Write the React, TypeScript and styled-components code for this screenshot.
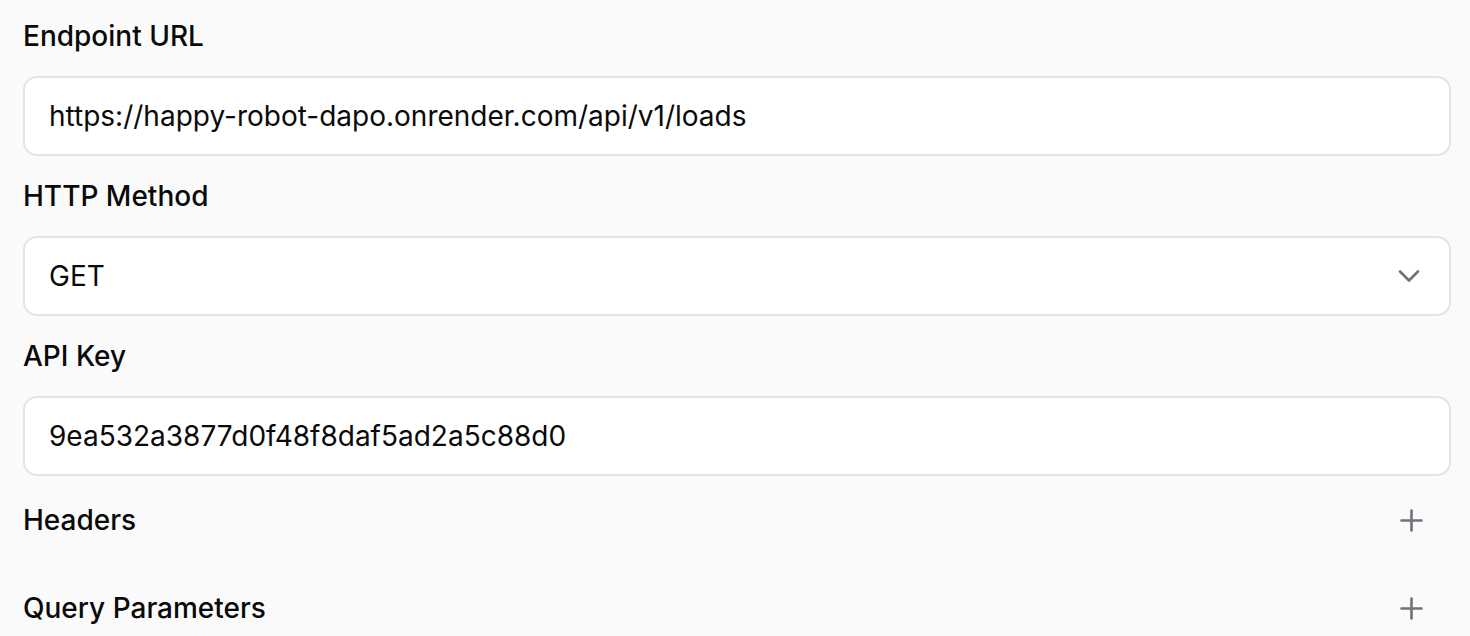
import React from "react";
import styled, { createGlobalStyle } from "styled-components";

const Global = createGlobalStyle`
  html, body { margin: 0; padding: 0; background: #fafafa; }
  body { font-family: Inter, "Noto Sans", sans-serif; color: #0a0a0a; }
`;

const Page = styled.div`
  padding: 16px 19px 0 23px;
  display: flex;
  flex-direction: column;
  gap: 20px;
  width: 1428px;
`;

const Field = styled.div`
  display: flex;
  flex-direction: column;
  gap: 20px;
`;

const Label = styled.div`
  font-size: 28px;
  line-height: 40px;
  font-weight: 500;
  color: #0a0a0a;
`;

const Box = styled.div`
  box-sizing: border-box;
  height: 80px;
  background: #ffffff;
  border: 2px solid #e4e4e7;
  border-radius: 14px;
  padding: 0 24px;
  display: flex;
  align-items: center;
  justify-content: space-between;
  font-size: 28px;
  color: #0a0a0a;
`;

const Row = styled.div<{ $top?: number }>`
  display: flex;
  align-items: center;
  justify-content: space-between;
  height: 48px;
  margin-top: ${(p) => p.$top ?? 0}px;
  padding-right: 28px;
`;

const Chevron = () => (
  <svg width="22" height="14" viewBox="0 0 22 14" fill="none" style={{ marginRight: 5 }}>
    <path d="M2 2.5 L11 11.5 L20 2.5" stroke="#71717a" strokeWidth="2.6" strokeLinecap="round" strokeLinejoin="round" />
  </svg>
);

const Plus = () => (
  <svg width="23" height="23" viewBox="0 0 23 23" fill="none">
    <path d="M11.5 1.5 V21.5 M1.5 11.5 H21.5" stroke="#71717a" strokeWidth="2.6" strokeLinecap="round" />
  </svg>
);

export default function App() {
  return (
    <>
      <Global />
      <Page>
        <Field>
          <Label>Endpoint URL</Label>
          <Box>https://happy-robot-dapo.onrender.com/api/v1/loads</Box>
        </Field>
        <Field>
          <Label>HTTP Method</Label>
          <Box>
            GET
            <Chevron />
          </Box>
        </Field>
        <Field>
          <Label>API Key</Label>
          <Box>9ea532a3877d0f48f8daf5ad2a5c88d0</Box>
        </Field>
        <Row>
          <Label>Headers</Label>
          <Plus />
        </Row>
        <Row $top={20}>
          <Label>Query Parameters</Label>
          <Plus />
        </Row>
      </Page>
    </>
  );
}
